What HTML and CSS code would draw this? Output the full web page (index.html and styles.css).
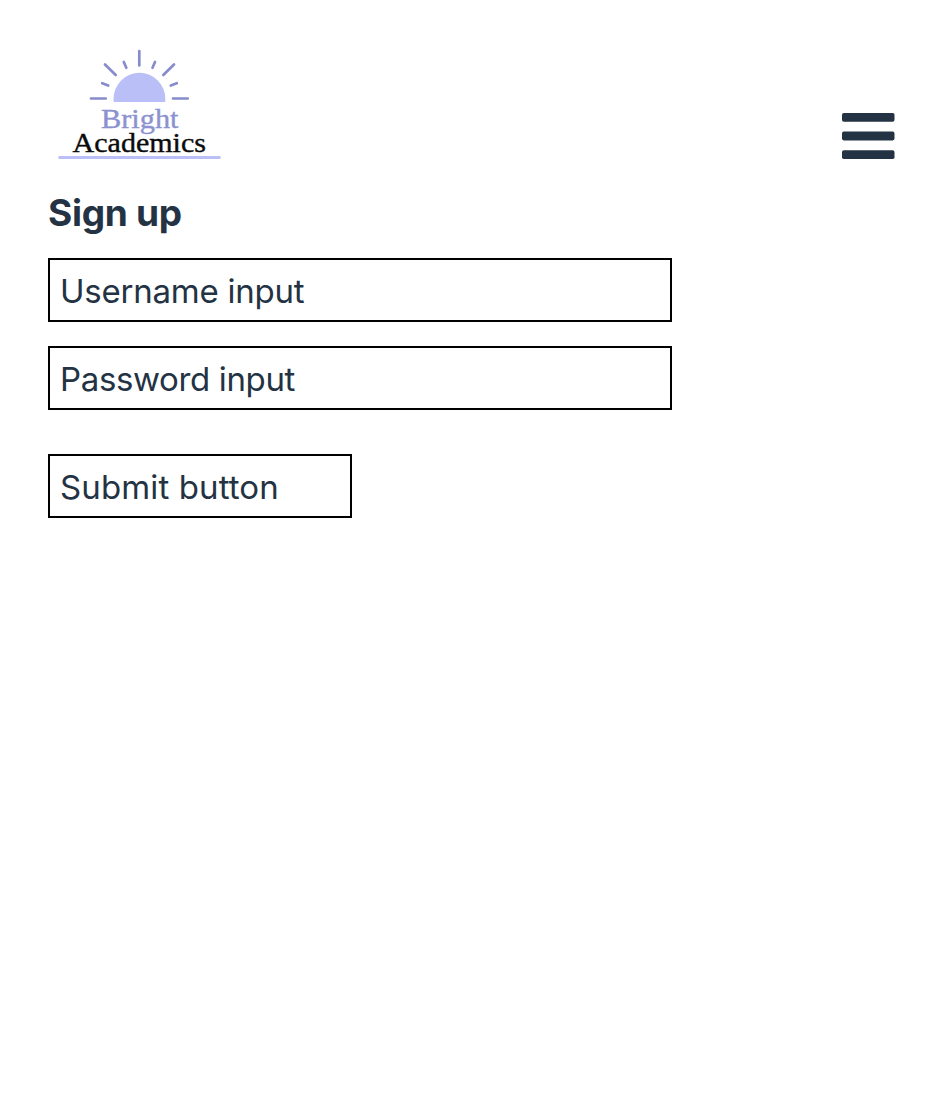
FILE: index.html
```html
<!DOCTYPE html>
<html lang="en">
<head>
<meta charset="utf-8">
<title>Bright Academics – Sign up</title>
<link rel="stylesheet" href="styles.css">
</head>
<body>
<header class="header">
  <svg class="logo" viewBox="48 40 184 128" role="img" aria-label="Bright Academics">
    <path class="sun" d="M113.6 102V98.7A25.85 25.85 0 0 1 165.3 98.7V102Z"/>
    <path class="rays" d="M139.3 51V65.5M91 98.5H105.8M173 98.5H187.8M105 64.5L115.7 75M174 64.5L163.3 75M123.8 62L126.3 67.8M155 62L152.5 67.8M102.2 83.2L108.2 85.5M176.8 83.2L170.8 85.5"/>
    <text class="word word-bright" x="101" y="128" textLength="77.5" lengthAdjust="spacingAndGlyphs">Bright</text>
    <text class="word word-academics" x="72.5" y="151.6" textLength="133.5" lengthAdjust="spacingAndGlyphs">Academics</text>
    <rect class="underline" x="58.5" y="156" width="162" height="3"/>
  </svg>
  <button class="menu" aria-label="Menu">
    <svg class="menu-icon" viewBox="0 0 53 46">
      <rect width="52.5" height="8.7" rx="1.8"/>
      <rect y="18.6" width="52.5" height="8.8" rx="1.8"/>
      <rect y="37.3" width="52.5" height="8.7" rx="1.8"/>
    </svg>
  </button>
</header>
<main class="content">
  <h1 class="title">Sign up</h1>
  <div class="field username">Username input</div>
  <div class="field password">Password input</div>
  <div class="field submit">Submit button</div>
</main>
</body>
</html>
```
FILE: styles.css
```css
* { box-sizing: border-box; }
body {
  margin: 0;
  background: #fff;
  color: #243344;
  font-family: Inter, "Liberation Sans", sans-serif;
}
.header {
  display: flex;
  justify-content: space-between;
  align-items: flex-end;
  height: 168px;
  padding: 40px 45px 0 48px;
}
.logo { width: 184px; height: 128px; }
.sun, .underline { fill: #babff8; }
.rays {
  fill: none;
  stroke: #868ccc;
  stroke-width: 2.7;
  stroke-linecap: round;
}
.word { font-family: "Liberation Serif", serif; stroke-width: .4; }
.word-bright { font-size: 28px; fill: #8c92d0; stroke: #8c92d0; }
.word-academics { font-size: 28px; fill: #0b0b0b; stroke: #0b0b0b; }
.menu {
  padding: 0;
  margin-bottom: 9px;
  border: 0;
  background: none;
  color: #243344;
}
.menu-icon { display: block; width: 53px; height: 46px; fill: currentColor; }
.content { padding: 22px 48px; }
.title {
  margin: 0 0 22px;
  font-size: 37px;
  line-height: 46px;
  font-weight: 700;
  letter-spacing: -.3px;
}
.field {
  width: 624px;
  height: 64px;
  margin-bottom: 24px;
  padding: 0 10px;
  border: 2px solid #000;
  font-size: 33px;
  line-height: 63px;
}
.username { letter-spacing: -.24px; }
.password { margin-bottom: 44px; letter-spacing: -.36px; }
.submit { width: 304px; letter-spacing: .12px; }
```
